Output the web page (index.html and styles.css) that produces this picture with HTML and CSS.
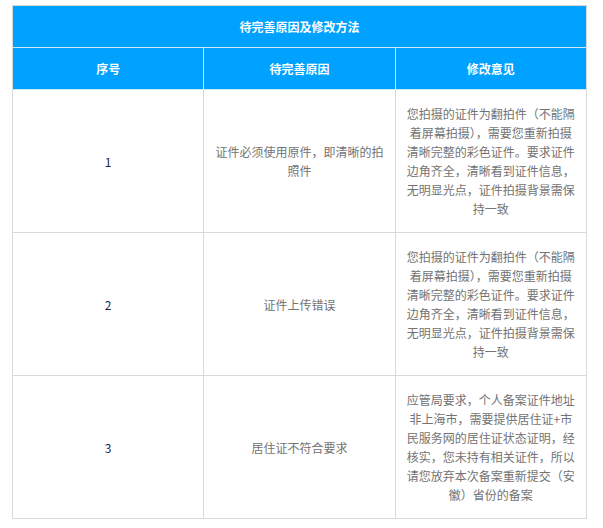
FILE: index.html
```html
<!DOCTYPE html>
<html lang="zh-CN">
<head>
<meta charset="utf-8">
<link rel="stylesheet" href="styles.css">
</head>
<body>
<table class="fix-table">
  <thead>
    <tr><th colspan="3" class="title">待完善原因及修改方法</th></tr>
    <tr><th>序号</th><th>待完善原因</th><th>修改意见</th></tr>
  </thead>
  <tbody>
    <tr>
      <td class="num">1</td>
      <td>证件必须使用原件，即清晰的拍照件</td>
      <td>您拍摄的证件为翻拍件（不能隔着屏幕拍摄），需要您重新拍摄清晰完整的彩色证件。要求证件边角齐全，清晰看到证件信息，无明显光点，证件拍摄背景需保持一致</td>
    </tr>
    <tr>
      <td class="num">2</td>
      <td>证件上传错误</td>
      <td>您拍摄的证件为翻拍件（不能隔着屏幕拍摄），需要您重新拍摄清晰完整的彩色证件。要求证件边角齐全，清晰看到证件信息，无明显光点，证件拍摄背景需保持一致</td>
    </tr>
    <tr>
      <td class="num">3</td>
      <td>居住证不符合要求</td>
      <td>应管局要求，个人备案证件地址非上海市，需要提供居住证+市民服务网的居住证状态证明，经核实，您未持有相关证件，所以请您放弃本次备案重新提交（安徽）省份的备案</td>
    </tr>
  </tbody>
</table>
</body>
</html>
```
FILE: styles.css
```css
html, body {
  margin: 0;
  padding: 0;
  background: #fff;
}
body {
  padding: 5px 0 0 12px;
  font-family: "Noto Sans CJK SC", "Noto Sans", sans-serif;
  font-size: 12px;
}
.fix-table {
  width: 575px;
  border-collapse: collapse;
  table-layout: fixed;
}
.fix-table th,
.fix-table td {
  border: 1px solid #d9d9d9;
  text-align: center;
  vertical-align: middle;
  line-height: 19px;
}
.fix-table th {
  background: #00a2ff;
  color: #fff;
  font-weight: bold;
  padding: 11px 10px;
  border-color: #cfe6f5;
}
.fix-table th.title {
  border-top-color: #d9d9d9;
  border-left-color: #d9d9d9;
  border-right-color: #d9d9d9;
}
.fix-table tr:nth-child(2) th:first-child { border-left-color: #d9d9d9; }
.fix-table tr:nth-child(2) th:last-child { border-right-color: #d9d9d9; }
.fix-table td {
  color: #737373;
  padding: 14px 10px;
}
.fix-table td.num {
  color: #1c1f4a;
}
```
